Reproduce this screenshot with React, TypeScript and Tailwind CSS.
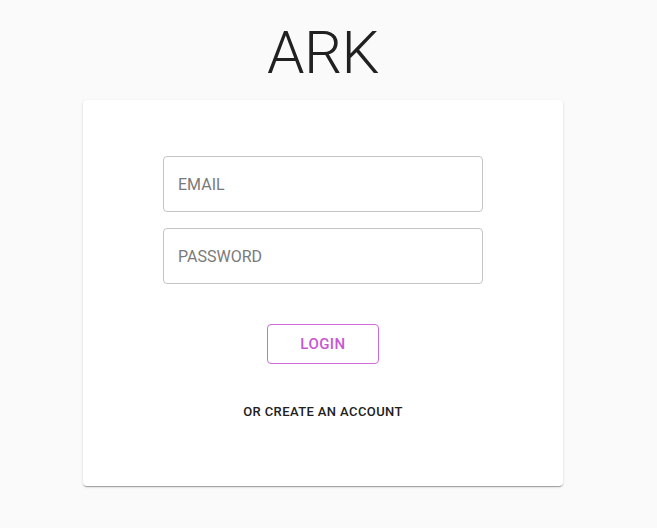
import React, { useState } from 'react';

const App: React.FC = () => {
  const [email, setEmail] = useState('');
  const [password, setPassword] = useState('');

  return (
    <div className="min-h-screen bg-[#fafafa] flex flex-col items-center pr-[11px] font-['Roboto',sans-serif]">
      <h1 className="mt-[18px] text-[60px] leading-[70px] font-light text-[#212121] tracking-[-0.5px]">ARK</h1>

      <div className="mt-[12px] w-[480px] bg-white rounded-[4px] shadow-[0px_2px_1px_-1px_rgba(0,0,0,0.2),0px_1px_1px_0px_rgba(0,0,0,0.14),0px_1px_3px_0px_rgba(0,0,0,0.12)] flex flex-col items-center pt-[56px] pb-[56px]">
        {/* Inputs */}
        <div className="w-[320px] flex flex-col gap-[16px]">
          <input
            type="email"
            placeholder="EMAIL"
            value={email}
            onChange={(e) => setEmail(e.target.value)}
            className="w-full h-[56px] px-[14px] rounded-[4px] border border-[#c4c4c4] bg-white text-[16px] text-[#212121] placeholder:text-[#7a7a7a] focus:outline-none focus:border-[#c95ad4]"
          />
          <input
            type="password"
            placeholder="PASSWORD"
            value={password}
            onChange={(e) => setPassword(e.target.value)}
            className="w-full h-[56px] px-[14px] rounded-[4px] border border-[#c4c4c4] bg-white text-[16px] text-[#212121] placeholder:text-[#7a7a7a] focus:outline-none focus:border-[#c95ad4]"
          />
        </div>

        {/* Login button */}
        <button className="mt-[40px] w-[112px] h-[40px] rounded-[4px] border border-[#cf6bd9] text-[#c956d3] text-[15px] font-medium tracking-[0.46px] uppercase hover:bg-[#c956d3]/5">
          Login
        </button>

        {/* Create account */}
        <button className="mt-[30px] h-[36px] px-[8px] rounded-[4px] text-[13px] font-medium tracking-[0.4px] uppercase text-[#212121] hover:bg-black/5">
          Or create an account
        </button>
      </div>
    </div>
  );
};

export default App;
